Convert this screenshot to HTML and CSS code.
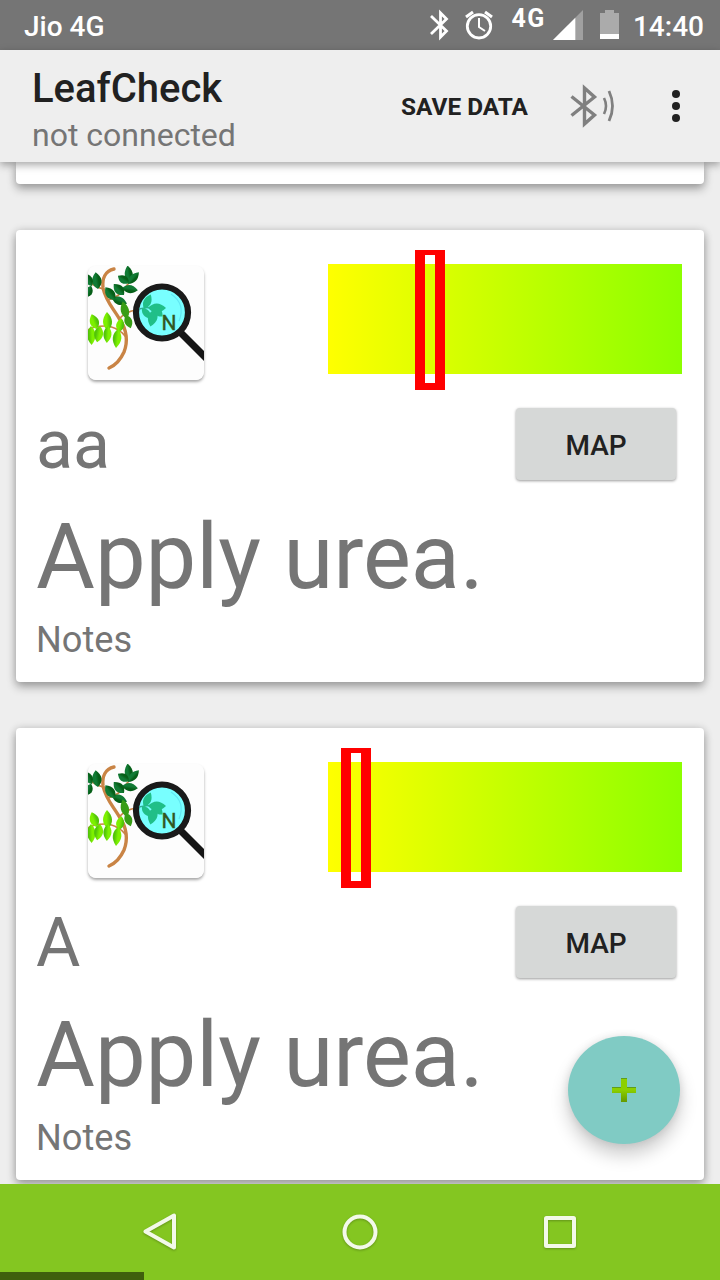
FILE: index.html
```html
<!DOCTYPE html>
<html lang="en">
<head>
<meta charset="utf-8">
<title>LeafCheck</title>
<link rel="stylesheet" href="styles.css">
</head>
<body>
<svg class="defs" width="0" height="0" aria-hidden="true">
  <defs>
    <linearGradient id="plusFill" x1="0" y1="0" x2="0" y2="1">
      <stop offset="0" stop-color="#8ed000"/><stop offset=".5" stop-color="#8bd000"/><stop offset="1" stop-color="#659900"/>
    </linearGradient>
    <linearGradient id="leafLight" x1="0" y1="0" x2="1" y2="0">
      <stop offset=".4" stop-color="#7df000"/><stop offset=".8" stop-color="#52c409"/>
    </linearGradient>
    <linearGradient id="leafDark" x1="0" y1="0" x2="1" y2="0">
      <stop offset=".4" stop-color="#117b35"/><stop offset=".7" stop-color="#065f18"/>
    </linearGradient>
    <clipPath id="tile"><rect x="0" y="0" width="116" height="114" rx="8"/></clipPath>
    <path id="leaf" d="M0 0C-6-6-6-13 0-20C6-13 6-6 0 0Z"/>
    <symbol id="plant" viewBox="0 0 116 114">
      <g clip-path="url(#tile)">
        <rect width="116" height="114" fill="#fdfdfd"/>
        <g fill="none" stroke="#c98445" stroke-linecap="round">
          <path stroke-width="3.4" d="M26 3C17 5 14 13 15 22C18 36 26 43 32 54C39 64 40 76 36 86C32 95 28 99 21 102"/>
          <path stroke-width="1.7" d="M20 34Q31 32 40 18M15 23Q7 21 0 15M31 53Q37 46 48 44M38 71Q29 60 17 60T0 64"/>
        </g>
        <g fill="url(#leafDark)">
          <use href="#leaf" transform="translate(10 23) rotate(-8) scale(1.05 .85)"/>
          <use href="#leaf" transform="translate(4 20) rotate(-28) scale(.85 .7)"/>
          <use href="#leaf" transform="translate(-1 31) rotate(20) scale(.8 .6)"/>
          <use href="#leaf" transform="translate(42 17) rotate(-8) scale(.9 .88)"/>
          <use href="#leaf" transform="translate(40 18) rotate(43) scale(.8 .8)"/>
          <use href="#leaf" transform="translate(41 17) rotate(-57) scale(.9 .66)"/>
          <use href="#leaf" transform="translate(34 22) rotate(98) scale(.9 .8)"/>
          <use href="#leaf" transform="translate(36 29) rotate(-43) scale(1 .75)"/>
          <use href="#leaf" transform="translate(24 32) rotate(111) scale(.9 .8)"/>
          <use href="#leaf" transform="translate(27 34) rotate(-37) scale(1 .8)"/>
        </g>
        <g fill="#389d16">
          <use href="#leaf" transform="translate(39 53) rotate(-14) scale(.9)"/>
          <use href="#leaf" transform="translate(38 49) rotate(160) scale(.85 .7)"/>
          <use href="#leaf" transform="translate(48 44) rotate(15) scale(.6)"/>
        </g>
        <g fill="url(#leafLight)">
          <use href="#leaf" transform="translate(20 65) rotate(-3) scale(1 .95)"/>
          <use href="#leaf" transform="translate(9 63) rotate(-20) scale(1 .78)"/>
          <use href="#leaf" transform="translate(31 66) rotate(10) scale(.9 .7)"/>
          <use href="#leaf" transform="translate(3 60) rotate(178) scale(.95 .95)"/>
          <use href="#leaf" transform="translate(12 60) rotate(190) scale(1 .83)"/>
          <use href="#leaf" transform="translate(20 60) rotate(184) scale(.9 .85)"/>
          <use href="#leaf" transform="translate(30 63) rotate(186) scale(.95 .95)"/>
        </g>
        <path d="M91 65L121 95" stroke="#151515" stroke-width="7"/>
        <circle cx="74" cy="46.500" r="26" fill="#78ffff" stroke="#1a1a1a" stroke-width="6.200"/>
        <path d="M83 28Q98 38 91 55" fill="none" stroke="#62e8f3" stroke-width="1.200"/>
        <path d="M51 43Q62 40 75 43" fill="none" stroke="#35aa99" stroke-width="1.500"/>
        <g fill="#20bf88">
          <use href="#leaf" transform="translate(56 43) rotate(25) scale(.85 .8)"/>
          <use href="#leaf" transform="translate(54 42) rotate(140) scale(.75 .7)"/>
          <use href="#leaf" transform="translate(60 42) rotate(90) scale(1 .9)"/>
          <use href="#leaf" transform="translate(67 43) rotate(195) scale(1.050 .9)"/>
          <use href="#leaf" transform="translate(66 42) rotate(135) scale(.8 .6)"/>
        </g>
        <text class="tile-letter" x="73.500" y="64">N</text>
      </g>
    </symbol>
  </defs>
</svg>
<div class="screen">
  <div class="status">
    <span class="carrier">Jio 4G</span>
    <svg class="status-icons" viewBox="0 0 200 50" aria-hidden="true">
      <path d="M11 16L26.500 31L20.500 37V13L26.500 19L11 34" fill="none" stroke="#fff" stroke-width="2.800"/>
      <g fill="none" stroke="#fff" stroke-width="2.800">
        <circle cx="59" cy="26.300" r="11.700"/><path d="M59 18V27L65 31" stroke-width="2"/><path d="M46 17L53 12M72 17L65 12" stroke-width="3"/>
      </g>
      <text class="network" x="91.500" y="27">4G</text>
      <path d="M133 40L163 10V40Z" fill="#a0a0a0"/><path d="M133 40L155.300 17.700V40Z" fill="#fff"/>
      <path d="M180 13H185V10H194V13H199V39H180Z" fill="#ababab"/><rect x="180" y="34" width="19" height="5" fill="#fff"/>
    </svg>
    <span class="clock">14:40</span>
  </div>
  <header class="appbar">
    <div class="titles"><div class="title">LeafCheck</div><div class="subtitle">not connected</div></div>
    <div class="save">SAVE DATA</div>
    <svg class="bt" viewBox="0 0 48 48" fill="none" stroke="#808080" aria-hidden="true">
      <path d="M2.500 14.500L25.500 33L15.500 42V6L25.500 15L2.500 33.500" stroke-width="3.400"/>
      <path d="M35 16Q39 24 35 32" stroke-width="2.600"/><path d="M40 9Q47 24 40 39" stroke-width="2.800"/>
    </svg>
    <svg class="more" viewBox="0 0 8 32" fill="#212121" aria-hidden="true"><circle cx="4" cy="4" r="4"/><circle cx="4" cy="16" r="4"/><circle cx="4" cy="28" r="4"/></svg>
  </header>
  <main class="list">
    <section class="card card-end"></section>
    <section class="card">
      <div class="top"><svg class="thumb"><use href="#plant"/></svg><div class="gauge"><div class="marker" style="left:87px"></div></div></div>
      <div class="name-row"><span class="name">aa</span><button class="map">MAP</button></div>
      <div class="advice">Apply urea.</div>
      <div class="notes">Notes</div>
    </section>
    <section class="card">
      <div class="top"><svg class="thumb"><use href="#plant"/></svg><div class="gauge"><div class="marker" style="left:13px"></div></div></div>
      <div class="name-row"><span class="name">A</span><button class="map">MAP</button></div>
      <div class="advice">Apply urea.</div>
      <div class="notes">Notes</div>
    </section>
    <div class="fab">
      <svg viewBox="0 0 24 24" aria-hidden="true"><path d="M9 0H15V9H24V15H15V24H9V15H0V9H9Z" fill="url(#plusFill)"/><path d="M0 9.500H9M15 9.500H24M9 .5H15" stroke="#5f9d1c"/></svg>
    </div>
  </main>
  <nav class="nav">
    <svg viewBox="0 0 40 40"><path d="M34 4.500V36.500L5.500 20.500Z"/></svg>
    <svg viewBox="0 0 40 40"><circle cx="20" cy="21" r="15.500"/></svg>
    <svg viewBox="0 0 40 40"><rect x="6" y="7" width="28" height="28" rx=".5"/></svg>
    <div class="progress"></div>
  </nav>
</div>
</body>
</html>
```
FILE: styles.css
```css
* { box-sizing: border-box; }
body { margin: 0; font-family: Roboto, sans-serif; }
.defs { position: absolute; }
.screen { width: 720px; height: 1280px; display: flex; flex-direction: column; overflow: hidden; background: #eee; }
.status { height: 50px; flex: none; display: flex; align-items: center; padding: 3px 16px 0 24px; background: #757575; color: #fff; font-size: 28px; font-weight: 500; }
.carrier { flex: 1; }
.status-icons { width: 200px; height: 50px; margin: -3px 13px 0 0; }
.network { font-size: 25px; font-weight: 700; fill: #fff; letter-spacing: 1.5px; }
.appbar { position: relative; z-index: 2; flex: none; height: 112px; display: flex; align-items: center; padding: 0 40px 0 32px; background: #eee; box-shadow: 0 3px 8px rgba(0,0,0,.35); }
.titles { flex: 1; padding-top: 7px; }
.title { font-size: 40px; line-height: 47px; font-weight: 500; color: #212121; }
.subtitle { font-size: 32px; line-height: 38px; margin-top: 4px; color: #757575; }
.save { font-size: 24.4px; font-weight: 700; color: #212121; margin-right: 41px; padding-top: 1px; }
.bt { width: 48px; height: 48px; margin-right: 55px; }
.more { width: 8px; height: 32px; }
.list { position: relative; flex: 1; min-height: 0; display: flex; flex-direction: column; gap: 46px; padding: 0 16px; overflow: hidden; }
.card { flex: none; height: 452px; padding: 34px 22px 0 20px; background: #fff; border-radius: 4px; box-shadow: 0 5px 10px rgba(0,0,0,.3), 0 0 8px rgba(0,0,0,.14); }
.card-end { height: 22px; padding: 0; border-radius: 0 0 4px 4px; }
.top { display: flex; justify-content: space-between; height: 144px; padding-left: 52px; }
.thumb { width: 116px; height: 114px; margin-top: 2px; border-radius: 8px; box-shadow: 0 2px 3px rgba(0,0,0,.35); }
.tile-letter { font: 21px Roboto, sans-serif; fill: #31571f; stroke: #31571f; stroke-width: .4px; }
.gauge { position: relative; width: 354px; height: 110px; background: linear-gradient(90deg, #ff0, #8cff00); }
.marker { position: absolute; top: -14px; width: 30px; height: 140px; border: solid #f00; border-width: 5px 10px 7px; }
.name-row { display: flex; align-items: center; justify-content: space-between; height: 72px; padding-right: 6px; }
.name { font-size: 68px; line-height: 72px; padding-top: 1px; color: #757575; }
.map { width: 160px; height: 72px; border: 0; border-radius: 4px; background: #d6d8d7; box-shadow: 0 1px 3px rgba(0,0,0,.4); font: 500 28px Roboto, sans-serif; color: #212121; padding: 2px 0 0; }
.advice { margin-top: 25px; font-size: 90.3px; line-height: 105px; color: #757575; }
.notes { margin-top: 9px; font-size: 36.2px; line-height: 42px; color: #757575; }
.fab { position: absolute; right: 40px; bottom: 40px; width: 112px; height: 108px; display: grid; place-items: center; border-radius: 50%; background: #80cbc4; box-shadow: 0 11px 18px rgba(0,0,0,.2), 0 0 8px rgba(0,0,0,.1); }
.fab svg { width: 24px; height: 24px; }
.nav { position: relative; flex: none; height: 96px; display: flex; justify-content: center; align-items: center; gap: 160px; background: #84c621; }
.nav svg { width: 40px; height: 40px; margin-top: -2px; fill: none; stroke: #f3f9e9; stroke-width: 4; stroke-linejoin: round; filter: drop-shadow(0 1px 1px rgba(0,0,0,.25)); }
.progress { position: absolute; left: 0; bottom: 0; width: 144px; height: 8px; background: #3f5f0d; }
```
